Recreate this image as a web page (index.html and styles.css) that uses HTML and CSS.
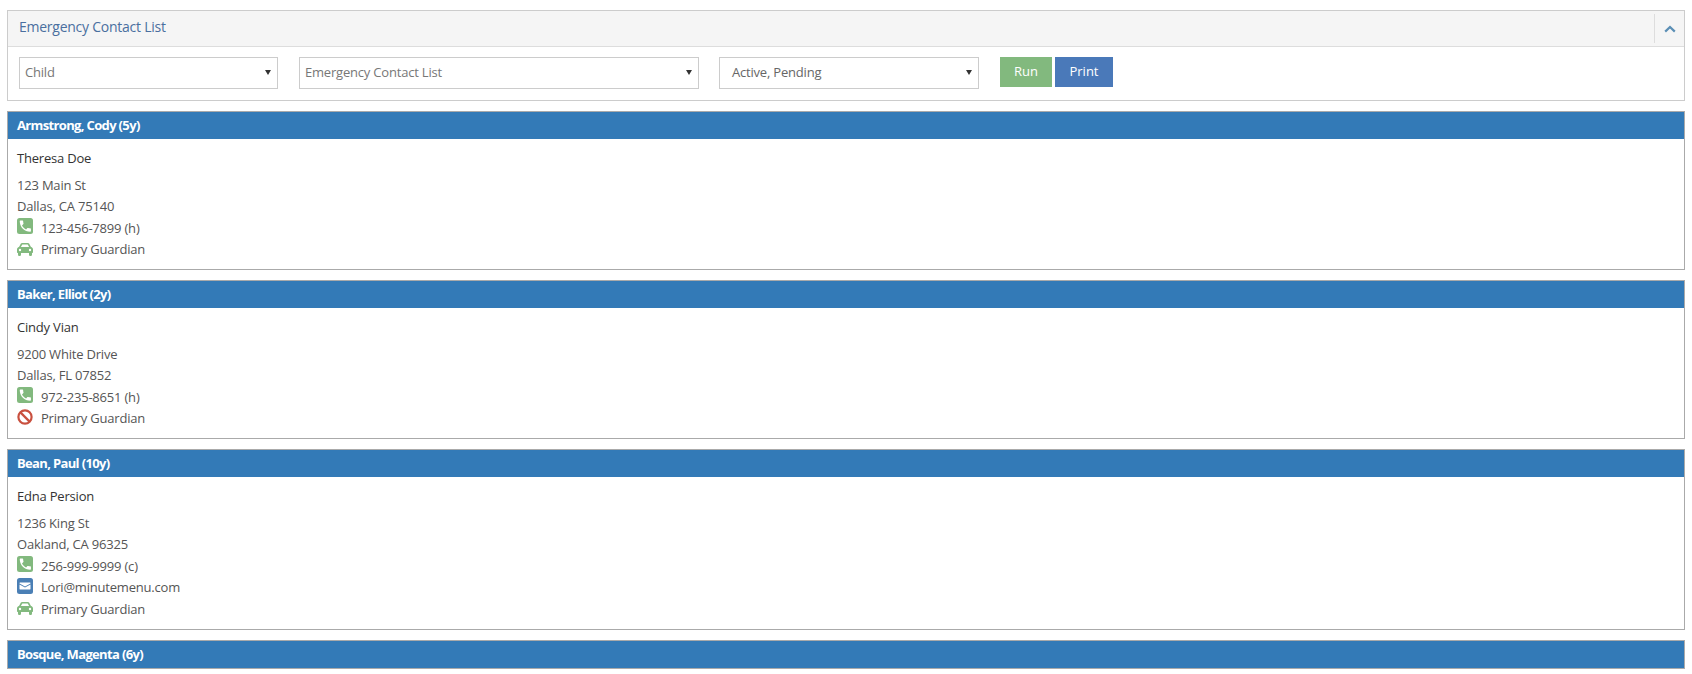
FILE: index.html
```html
<!DOCTYPE html>
<html lang="en">
<head>
<meta charset="utf-8">
<title>Emergency Contact List</title>
<link rel="stylesheet" href="styles.css">
</head>
<body>
<svg class="defs" width="0" height="0" aria-hidden="true">
  <symbol id="i-phone" viewBox="0 0 16 16">
    <rect width="16" height="16" rx="2.5" fill="#82b97e"/>
    <path fill="#fff" transform="translate(.9 .7) scale(.62)" d="M6.62 10.79c1.44 2.83 3.76 5.14 6.59 6.59l2.2-2.2c.27-.27.67-.36 1.02-.24 1.12.37 2.33.57 3.57.57.55 0 1 .45 1 1V20c0 .55-.45 1-1 1-9.39 0-17-7.61-17-17 0-.55.45-1 1-1h3.5c.55 0 1 .45 1 1 0 1.25.2 2.45.57 3.57.11.35.03.74-.25 1.02l-2.2 2.2z"/>
  </symbol>
  <symbol id="i-mail" viewBox="0 0 16 16">
    <rect width="16" height="16" rx="2.5" fill="#4a7fb5"/>
    <path fill="#fff" d="M3 4.5h10c.3 0 .5.2.5.5v.4L8 8.4 2.5 5.4V5c0-.3.2-.5.5-.5zM2.5 6.6 8 9.6l5.5-3V11c0 .3-.2.5-.5.5H3c-.3 0-.5-.2-.5-.5z"/>
  </symbol>
  <symbol id="i-car" viewBox="0 0 16 13">
    <path fill="#82b97e" fill-rule="evenodd" d="M3.9.6C4.2.2 4.6 0 5.1 0h5.8c.5 0 .9.2 1.2.6L14 4c1.2.3 2 1.3 2 2.4v2.9c0 .4-.3.7-.7.7H15v1.4c0 .9-.7 1.6-1.5 1.6s-1.5-.7-1.5-1.6V10H4v1.4c0 .9-.7 1.6-1.5 1.6S1 12.3 1 11.4V10H.7c-.4 0-.7-.3-.7-.7V6.4C0 5.3.8 4.300 2 4zM5.300 1.600 3.900 4h8.200l-1.400-2.400zM3 5.800a1.200 1.200 0 1 0 0 2.400 1.200 1.200 0 0 0 0-2.400zm10 0a1.200 1.200 0 1 0 0 2.400 1.200 1.200 0 0 0 0-2.400z"/>
  </symbol>
  <symbol id="i-ban" viewBox="0 0 16 16">
    <circle cx="8" cy="8" r="6.600" fill="none" stroke="#c9503f" stroke-width="2.200"/>
    <path d="M3.400 3.400l9.200 9.200" stroke="#c9503f" stroke-width="2.200"/>
  </symbol>
</svg>

<section class="panel">
  <header class="panel-head">
    <h1 class="panel-title">Emergency Contact List</h1>
    <div class="collapse">
      <svg class="chev" viewBox="0 0 12 8" width="12" height="8" aria-hidden="true"><path d="M1.200 6.600 6 2l4.800 4.600" fill="none" stroke="#5b8fb5" stroke-width="2.200"/></svg>
    </div>
  </header>
  <div class="filters">
    <div class="select sel-a"><span>Child</span><span class="arrow"></span></div>
    <div class="select sel-b"><span>Emergency Contact List</span><span class="arrow"></span></div>
    <div class="select sel-c"><span>Active, Pending</span><span class="arrow"></span></div>
    <div class="buttons">
      <button class="btn btn-run">Run</button>
      <button class="btn btn-print">Print</button>
    </div>
  </div>
</section>

<article class="card">
  <h2 class="card-head">Armstrong, Cody (5y)</h2>
  <div class="card-body">
    <div class="name">Theresa Doe</div>
    <div class="line">123 Main St</div>
    <div class="line">Dallas, CA 75140</div>
    <div class="line"><svg class="ico"><use href="#i-phone"/></svg>123-456-7899 (h)</div>
    <div class="line"><svg class="ico car"><use href="#i-car"/></svg>Primary Guardian</div>
  </div>
</article>

<article class="card">
  <h2 class="card-head">Baker, Elliot (2y)</h2>
  <div class="card-body">
    <div class="name">Cindy Vian</div>
    <div class="line">9200 White Drive</div>
    <div class="line">Dallas, FL 07852</div>
    <div class="line"><svg class="ico"><use href="#i-phone"/></svg>972-235-8651 (h)</div>
    <div class="line"><svg class="ico"><use href="#i-ban"/></svg>Primary Guardian</div>
  </div>
</article>

<article class="card">
  <h2 class="card-head">Bean, Paul (10y)</h2>
  <div class="card-body">
    <div class="name">Edna Persion</div>
    <div class="line">1236 King St</div>
    <div class="line">Oakland, CA 96325</div>
    <div class="line"><svg class="ico"><use href="#i-phone"/></svg>256-999-9999 (c)</div>
    <div class="line"><svg class="ico"><use href="#i-mail"/></svg>Lori@minutemenu.com</div>
    <div class="line"><svg class="ico car"><use href="#i-car"/></svg>Primary Guardian</div>
  </div>
</article>

<article class="card">
  <h2 class="card-head">Bosque, Magenta (6y)</h2>
</article>
</body>
</html>
```
FILE: styles.css
```css
html, body { height: 100%; overflow: hidden; }
body {
  margin: 0;
  padding: 10px 7px 0;
  box-sizing: border-box;
  background: #fff;
  font-family: "Open Sans", "Noto Sans", sans-serif;
  font-size: 13px;
  letter-spacing: -0.2px;
  color: #555;
}
.defs { position: absolute; }

.panel { border: 1px solid #ccc; margin-bottom: 10px; }
.panel-head {
  display: flex;
  justify-content: space-between;
  align-items: center;
  height: 35px;
  background: #f5f5f5;
  border-bottom: 1px solid #ddd;
}
.panel-title {
  margin: 0 0 4px 11px;
  font-size: 14px;
  font-weight: 400;
  letter-spacing: -0.25px;
  color: #4a6f9f;
}
.collapse {
  display: flex;
  align-items: center;
  justify-content: center;
  width: 29px;
  height: 29px;
  border-left: 1px solid #ddd;
}
.filters { display: flex; align-items: flex-start; padding: 10px 11px 11px; height: 32px; }
.select {
  display: flex;
  align-items: center;
  justify-content: space-between;
  box-sizing: border-box;
  height: 32px;
  padding: 0 6px 2px 5px;
  border: 1px solid #ccc;
  color: #777;
  background: #fff;
}
.sel-a { width: 259px; margin-right: 21px; }
.sel-b { width: 400px; margin-right: 20px; }
.sel-c { width: 260px; margin-right: 21px; padding-left: 12px; color: #666; }
.arrow {
  width: 0;
  height: 0;
  border-left: 3px solid transparent;
  border-right: 3px solid transparent;
  border-top: 5px solid #333;
}
.buttons { display: flex; gap: 3px; }
.btn {
  height: 30px;
  border: 0;
  padding: 0 0 2px;
  color: #fff;
  font: 13px "Open Sans", sans-serif;
}
.btn-run { width: 52px; background: #82b97e; }
.btn-print { width: 58px; background: #4a79b9; }

.card { border: 1px solid #aaa; margin-bottom: 10px; }
.card-head {
  margin: 0;
  height: 27px;
  line-height: 27px;
  padding: 0 9px;
  background: #337ab7;
  color: #fff;
  font-size: 13px;
  font-weight: 700;
  letter-spacing: -0.65px;
}
.card-body { padding: 9px 9px 9px; }
.name { height: 26px; line-height: 21px; color: #333; }
.line { display: flex; align-items: center; height: 21.5px; }
.ico { width: 16px; height: 16px; margin-right: 8px; margin-top: -3px; flex: none; }
.car { height: 13px; margin-top: 0; }
```
